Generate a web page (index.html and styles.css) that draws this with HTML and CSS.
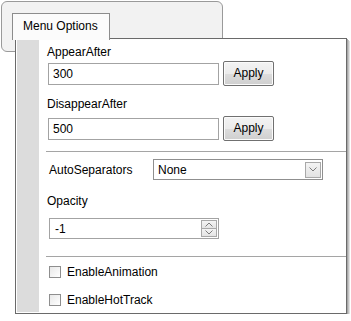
FILE: index.html
```html
<!DOCTYPE html>
<html>
<head>
<meta charset="utf-8">
<link rel="stylesheet" href="styles.css">
</head>
<body>
<div class="frame"><div class="tab">Menu Options</div></div>
<div class="panel">
  <div class="strip"></div>
  <div class="content">
    <div class="label l1">AppearAfter</div>
    <div class="row r1">
      <div class="textbox">300</div>
      <div class="button">Apply</div>
    </div>
    <div class="label l2">DisappearAfter</div>
    <div class="row r2">
      <div class="textbox">500</div>
      <div class="button">Apply</div>
    </div>
    <div class="sep s1"></div>
    <div class="combo-row">
      <div class="combo-label">AutoSeparators</div>
      <div class="combo">
        <span class="combo-text">None</span>
        <span class="drop">
          <svg width="8" height="5" viewBox="0 0 8 5"><path d="M0.5 0.5 L4 4 L7.5 0.5" fill="none" stroke="#7c7c7c" stroke-width="1"/></svg>
        </span>
      </div>
    </div>
    <div class="label l3">Opacity</div>
    <div class="numeric">
      <span class="num-text">-1</span>
      <span class="spin">
        <span class="spin-btn up"><svg width="8" height="5" viewBox="0 0 8 5"><path d="M0.5 4.5 L4 1 L7.5 4.5" fill="none" stroke="#7c7c7c" stroke-width="1"/></svg></span>
        <span class="spin-btn down"><svg width="8" height="5" viewBox="0 0 8 5"><path d="M0.5 0.5 L4 4 L7.5 0.5" fill="none" stroke="#7c7c7c" stroke-width="1"/></svg></span>
      </span>
    </div>
    <div class="sep s2"></div>
    <div class="check c1"><span class="box"></span><span>EnableAnimation</span></div>
    <div class="check c2"><span class="box"></span><span>EnableHotTrack</span></div>
  </div>
</div>
</body>
</html>
```
FILE: styles.css
```css
html, body {
  margin: 0;
  padding: 0;
  background: #ffffff;
}
body {
  font-family: "Liberation Sans", Arial, sans-serif;
  font-size: 12px;
  color: #000000;
}
.frame {
  box-sizing: border-box;
  margin: 1px 0 0 1px;
  width: 222px;
  height: 51px;
  border: 1px solid #9a9a9a;
  border-radius: 6px;
  background: #f2f2f2;
  padding: 11px 0 0 10px;
}
.tab {
  position: relative;
  z-index: 3;
  box-sizing: border-box;
  width: 98px;
  height: 27px;
  border: 1px solid #8c8c8c;
  border-bottom: none;
  background: #fbfbfb;
  padding: 4px 0 0 10px;
  line-height: 16px;
  white-space: nowrap;
}
.panel {
  position: relative;
  z-index: 2;
  box-sizing: border-box;
  margin: -14px 0 0 15px;
  width: 332px;
  border: 1px solid #6a6a6a;
  background: #ffffff;
  padding: 1px;
  display: flex;
  box-shadow: 1px 1px 0 #a8a8a8, 2px 2px 0 #c4c4c4, 3px 3px 0 #e2e2e2;
}
.strip {
  width: 22px;
  background: #dcdcdc;
  flex: none;
}
.content {
  flex: 1;
  display: flex;
  flex-direction: column;
  padding: 0 0 4px 8px;
}
.label {
  height: 16px;
  line-height: 16px;
  white-space: nowrap;
}
.l1 { margin-top: 4px; }
.l2 { margin-top: 10px; }
.l3 { margin-top: 13px; }
.row {
  display: flex;
  align-items: center;
  height: 25px;
}
.r1 { margin-top: 1px; }
.r2 { margin-top: 4px; }
.textbox {
  box-sizing: border-box;
  margin-left: 1px;
  width: 171px;
  height: 22px;
  border: 1px solid #a3a3a3;
  padding-left: 4px;
  line-height: 20px;
}
.button {
  box-sizing: border-box;
  margin-left: 4px;
  width: 51px;
  height: 25px;
  border: 1px solid #707070;
  border-radius: 2px;
  background: linear-gradient(to bottom, #f3f3f3 0%, #ebebeb 50%, #dddddd 51%, #cfcfcf 100%);
  box-shadow: inset 0 0 0 1px #fbfbfb;
  text-align: center;
  line-height: 23px;
}
.sep {
  height: 1px;
  background: #a5a5a5;
  margin-left: -1px;
  margin-right: -1px;
}
.s1 { margin-top: 10px; }
.s2 { margin-top: 17px; }
.combo-row {
  display: flex;
  align-items: center;
  margin-top: 7px;
  height: 21px;
}
.combo-label {
  width: 106px;
  flex: none;
  padding-left: 2px;
  box-sizing: border-box;
  white-space: nowrap;
}
.combo {
  box-sizing: border-box;
  width: 170px;
  height: 21px;
  border: 1px solid #8f8f8f;
  display: flex;
  align-items: center;
  padding: 0 1px 0 4px;
}
.combo-text { flex: 1; }
.drop {
  box-sizing: border-box;
  width: 16px;
  height: 16px;
  border: 1px solid #a8a8a8;
  background: linear-gradient(to bottom, #f4f4f4, #e2e2e2);
  display: flex;
  align-items: center;
  justify-content: center;
}
.numeric {
  box-sizing: border-box;
  margin-top: 9px;
  margin-left: 2px;
  width: 170px;
  height: 21px;
  border: 1px solid #a3a3a3;
  display: flex;
  align-items: center;
  padding: 0 1px 0 5px;
}
.num-text { flex: 1; }
.spin {
  display: flex;
  flex-direction: column;
  width: 16px;
  height: 17px;
}
.spin-btn {
  box-sizing: border-box;
  flex: 1;
  border: 1px solid #a8a8a8;
  background: linear-gradient(to bottom, #f4f4f4, #e4e4e4);
  display: flex;
  align-items: center;
  justify-content: center;
}
.spin-btn.down { border-top: none; }
.check {
  display: flex;
  align-items: center;
  height: 16px;
  white-space: nowrap;
}
.c1 { margin-top: 7px; }
.c2 { margin-top: 12px; }
.box {
  box-sizing: border-box;
  width: 12px;
  height: 12px;
  margin: 0 6px 0 2px;
  border: 1px solid #8e8e8e;
  background: linear-gradient(135deg, #e8e8e8, #ffffff);
}
```
